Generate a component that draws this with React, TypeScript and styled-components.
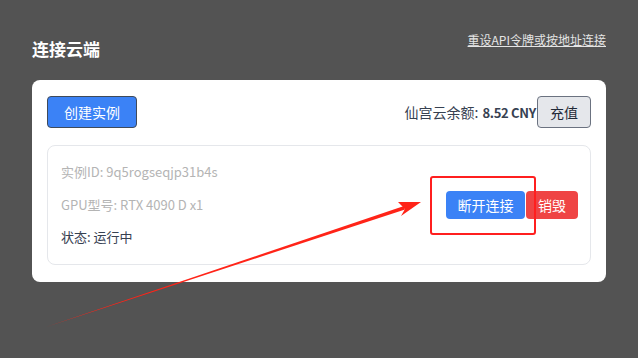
import React from "react";
import styled, { createGlobalStyle } from "styled-components";

const GlobalStyle = createGlobalStyle`
    html, body {
        margin: 0;
        padding: 0;
        background: #535353;
    }
    body {
        font-family: "Noto Sans CJK SC", "Noto Sans", sans-serif;
        width: 638px;
        height: 358px;
        overflow: hidden;
    }
`;

const Page = styled.div`
    position: relative;
    width: 638px;
    height: 358px;
    box-sizing: border-box;
    padding: 30px 32px 0 32px;
`;

const Header = styled.div`
    display: flex;
    justify-content: space-between;
    align-items: flex-start;
    height: 50px;
`;

const Title = styled.h2`
    margin: 8px 0 0 0;
    font-size: 17px;
    line-height: 22px;
    font-weight: 700;
    color: #ffffff;
`;

const ResetLink = styled.a`
    margin-top: 1px;
    font-size: 12px;
    line-height: 18px;
    color: #e5e5e5;
    text-decoration: underline;
    cursor: pointer;
`;

const Card = styled.div`
    background: #ffffff;
    border-radius: 8px;
    padding: 16px 15px 17px 15px;
`;

const TopRow = styled.div`
    display: flex;
    justify-content: space-between;
    align-items: center;
    margin-bottom: 17px;
`;

const Balance = styled.div`
    display: flex;
    align-items: center;
    font-size: 14px;
    color: #374151;
`;

const Amount = styled.span`
    font-weight: 600;
    font-size: 13px;
    letter-spacing: -0.3px;
    margin-left: 4px;
`;

const Button = styled.button<{ $tone: "blue" | "gray" | "red"; $w: number; $h: number }>`
    box-sizing: border-box;
    width: ${(p) => p.$w}px;
    height: ${(p) => p.$h}px;
    font-family: inherit;
    font-size: 14px;
    border-radius: 4px;
    cursor: pointer;
    padding: 0;
    border: ${(p) =>
        p.$tone === "blue" && p.$h > 30
            ? "1px solid #3f4a5a"
            : p.$tone === "gray"
            ? "1px solid #6b7280"
            : "none"};
    background: ${(p) =>
        p.$tone === "blue" ? "#3b82f6" : p.$tone === "red" ? "#ef4444" : "#e5e7eb"};
    color: ${(p) => (p.$tone === "gray" ? "#1f2937" : "#ffffff")};
`;

const Instance = styled.div`
    display: flex;
    justify-content: space-between;
    align-items: center;
    border: 1px solid #e5e7eb;
    border-radius: 8px;
    padding: 10px 12px 10px 13px;
`;

const Info = styled.div`
    display: flex;
    flex-direction: column;
`;

const InfoLine = styled.div<{ $muted?: boolean }>`
    font-size: 13px;
    line-height: 32.5px;
    color: ${(p) => (p.$muted ? "#b4b4b4" : "#374151")};
`;

const Actions = styled.div`
    position: relative;
    display: flex;
    gap: 1px;
`;

const Highlight = styled.div`
    position: absolute;
    left: -16px;
    top: -15px;
    width: 106px;
    height: 59px;
    box-sizing: border-box;
    border: 2.5px solid #ff1f1f;
    border-radius: 3px;
    pointer-events: none;
`;

const Overlay = styled.svg`
    position: absolute;
    left: 0;
    top: 0;
    pointer-events: none;
`;

export default function App() {
    return (
        <>
            <GlobalStyle />
            <Page>
                <Header>
                    <Title>连接云端</Title>
                    <ResetLink>重设API令牌或按地址连接</ResetLink>
                </Header>
                <Card>
                    <TopRow>
                        <Button $tone="blue" $w={90} $h={32}>创建实例</Button>
                        <Balance>
                            仙宫云余额:<Amount>8.52 CNY</Amount>
                            <Button $tone="gray" $w={54} $h={32} style={{ marginLeft: 1 }}>充值</Button>
                        </Balance>
                    </TopRow>
                    <Instance>
                        <Info>
                            <InfoLine $muted>实例ID: 9q5rogseqjp31b4s</InfoLine>
                            <InfoLine $muted>GPU型号: RTX 4090 D x1</InfoLine>
                            <InfoLine>状态: 运行中</InfoLine>
                        </Info>
                        <Actions>
                            <Highlight />
                            <Button $tone="blue" $w={79} $h={28}>断开连接</Button>
                            <Button $tone="red" $w={52} $h={28}>销毁</Button>
                        </Actions>
                    </Instance>
                </Card>
                <Overlay width="638" height="358" viewBox="0 0 638 358">
                    <polygon points="46,327 404,206 405,209.5" fill="#ff2418" />
                    <polygon points="421,202 398,202 405,209 401,216" fill="#ff2418" />
                </Overlay>
            </Page>
        </>
    );
}
